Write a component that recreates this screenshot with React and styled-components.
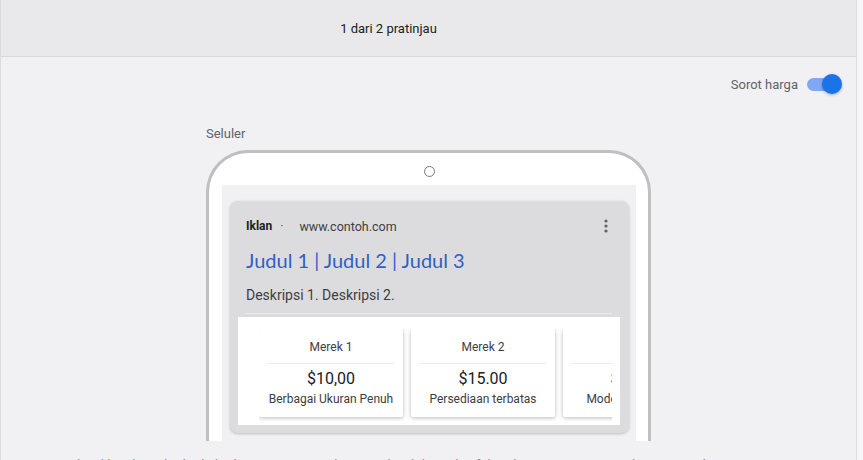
import React from "react"
import styled, { createGlobalStyle } from "styled-components"

const Global = createGlobalStyle`
  html, body {
    margin: 0;
    padding: 0;
    background: #f6f6f8;
    font-family: Roboto, "Liberation Sans", Arial, sans-serif;
  }
`

const Panel = styled.div`
  width: 857px;
  height: 460px;
  overflow: hidden;
  background: #f1f1f4;
  border-left: 1px solid #dadce0;
  border-right: 1px solid #dadce0;
  box-sizing: border-box;
`

const Header = styled.div`
  height: 57px;
  box-sizing: border-box;
  border-bottom: 1px solid #d9d9dd;
  background: #e9e9ec;
  display: flex;
  align-items: center;
  justify-content: center;
  padding-right: 80px;
  font-size: 13px;
  color: #202124;
`

const ToggleRow = styled.div`
  display: flex;
  justify-content: flex-end;
  align-items: center;
  gap: 9px;
  height: 22px;
  padding: 16px 17px 0 0;
  font-size: 13px;
  color: #5f6368;
`

const Track = styled.div`
  position: relative;
  width: 32px;
  height: 13px;
  border-radius: 7px;
  background: ${(p) => (p.on ? "#7fa9f3" : "#bdc1c6")};
`

const Thumb = styled.div`
  position: absolute;
  top: -4px;
  left: ${(p) => (p.on ? "15px" : "-3px")};
  width: 20px;
  height: 20px;
  border-radius: 50%;
  background: ${(p) => (p.on ? "#1a73e8" : "#fff")};
  box-shadow: 0 1px 3px rgba(0, 0, 0, 0.3);
`

const Preview = styled.div`
  width: 445px;
  margin: 0 auto;
  padding-top: 31px;
`

const Label = styled.div`
  font-size: 13px;
  line-height: 16px;
  color: #5f6368;
  margin-bottom: 8px;
`

const Clip = styled.div`
  height: 291px;
  overflow: hidden;
`

const Phone = styled.div`
  height: 340px;
  box-sizing: border-box;
  border: 3px solid #bebec3;
  border-bottom: none;
  border-radius: 42px 42px 0 0;
  background: #fff;
  padding: 13px 12px 0 13px;
`

const Camera = styled.div`
  width: 9px;
  height: 9px;
  border: 1px solid #7a7a7e;
  border-radius: 50%;
  margin: 0 auto 8px;
`

const Screen = styled.div`
  background: #f1f1f3;
  padding: 16px 7px 8px 8px;
`

const AdCard = styled.div`
  background: #dcdcde;
  border-radius: 8px;
  box-shadow: 0 1px 3px rgba(0, 0, 0, 0.22);
  padding: 17px 9px 8px 8px;
`

const AdTop = styled.div`
  display: flex;
  align-items: center;
  height: 16px;
  padding: 0 8px;
  font-size: 12px;
  color: #202124;
`

const Sponsored = styled.span`
  font-weight: 700;
`

const Dot = styled.span`
  margin: 0 16px 0 8px;
  color: #5f6368;
`

const Url = styled.span`
  flex: 1;
  font-size: 12.5px;
  color: #3c4043;
`

const Title = styled.div`
  margin-top: 12px;
  padding: 0 8px;
  font-family: Lato, Roboto, sans-serif;
  font-size: 20px;
  line-height: 28px;
  color: #2f5fc9;
`

const Desc = styled.div`
  margin: 11px 8px 0;
  padding-bottom: 8px;
  border-bottom: 1px solid #ececee;
  font-size: 14px;
  line-height: 20px;
  color: #3c4043;
`

const Extension = styled.div`
  margin-top: 3px;
  background: #fff;
  padding: 12px 8px 4px 21px;
`

const Carousel = styled.div`
  display: flex;
  gap: 8px;
  overflow: hidden;
  padding-bottom: 4px;
`

const PriceCard = styled.div`
  flex: 0 0 144px;
  height: 88px;
  box-sizing: border-box;
  background: #fff;
  box-shadow: 0 1px 4px rgba(0, 0, 0, 0.28);
  border-radius: 2px;
  text-align: center;
  padding: 0 9px;
  color: #202124;
  white-space: nowrap;
  overflow: hidden;
`

const Brand = styled.div`
  font-size: 12px;
  line-height: 16px;
  padding: 10px 0 8px;
  border-bottom: 1px solid #e8eaed;
  color: #3c4043;
`

const Price = styled.div`
  font-size: 16px;
  line-height: 22px;
  margin-top: 4px;
`

const Sub = styled.div`
  font-size: 12px;
  line-height: 16px;
  margin-top: 1px;
  color: #3c4043;
`

const Footnote = styled.div`
  margin-top: 15px;
  padding-left: 40px;
  font-size: 13px;
  line-height: 18px;
  color: #80868b;
  white-space: nowrap;
`

const items = [
  { brand: "Merek 1", price: "$10,00", sub: "Berbagai Ukuran Penuh" },
  { brand: "Merek 2", price: "$15.00", sub: "Persediaan terbatas" },
  { brand: "Merek 3", price: "$20.00", sub: "Model Paling Baru" },
]

const MoreIcon = () => (
  <svg width="12" height="16" viewBox="0 0 12 16">
    <circle cx="6" cy="3" r="1.6" fill="#5f6368" />
    <circle cx="6" cy="8" r="1.6" fill="#5f6368" />
    <circle cx="6" cy="13" r="1.6" fill="#5f6368" />
  </svg>
)

export default function App() {
  const on = true
  return (
    <>
      <Global />
      <Panel>
        <Header>1 dari 2 pratinjau</Header>
        <ToggleRow>
          Sorot harga
          <Track on={on}>
            <Thumb on={on} />
          </Track>
        </ToggleRow>
        <Preview>
          <Label>Seluler</Label>
          <Clip>
            <Phone>
              <Camera />
              <Screen>
                <AdCard>
                  <AdTop>
                    <Sponsored>Iklan</Sponsored>
                    <Dot>·</Dot>
                    <Url>www.contoh.com</Url>
                    <MoreIcon />
                  </AdTop>
                  <Title>Judul 1 | Judul 2 | Judul 3</Title>
                  <Desc>Deskripsi 1. Deskripsi 2.</Desc>
                  <Extension>
                    <Carousel>
                      {items.map((it) => (
                        <PriceCard key={it.brand}>
                          <Brand>{it.brand}</Brand>
                          <Price>{it.price}</Price>
                          <Sub>{it.sub}</Sub>
                        </PriceCard>
                      ))}
                    </Carousel>
                  </Extension>
                </AdCard>
              </Screen>
            </Phone>
          </Clip>
        </Preview>
        <Footnote>
          Tampilan iklan dapat berbeda-beda, tergantung pada perangkat, lokasi, dan faktor lainnya. Pratinjau ini hanya contoh.
        </Footnote>
      </Panel>
    </>
  )
}
